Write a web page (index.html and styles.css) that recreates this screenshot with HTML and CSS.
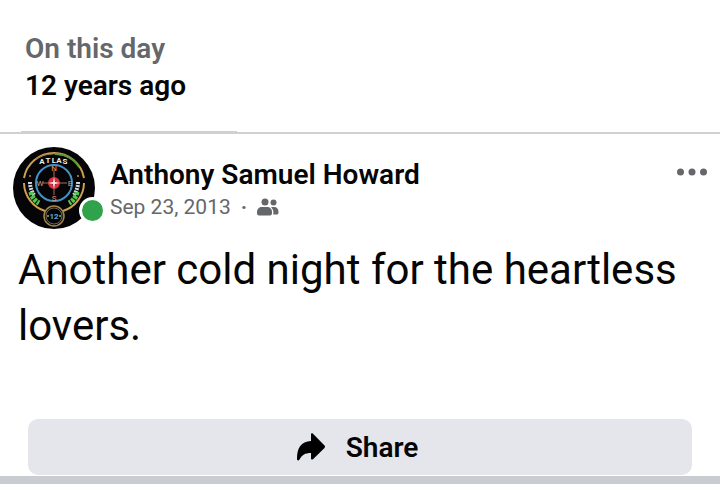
FILE: index.html
```html
<!DOCTYPE html>
<html lang="en">
<head>
    <meta charset="UTF-8">
    <meta name="viewport" content="width=device-width, initial-scale=1.0">
    <title>Memories</title>
    <link rel="stylesheet" href="styles.css">
</head>
<body>
    <header class="memory-header">
        <h2 class="memory-label">On this day</h2>
        <p class="memory-age">12 years ago</p>
    </header>
    <div class="divider"></div>

    <article class="post">
        <div class="post-header">
            <div class="avatar">
                <svg viewBox="0 0 82 82" role="img" aria-label="Profile picture">
                    <circle cx="41" cy="41" r="41" fill="#050507"/>
                    <g fill="none">
                        <path d="M11 31A30.500 30.500 0 0 1 71 31" stroke="#cf9f50" stroke-width="2"/>
                        <path d="M22 12Q40 1 61 13" stroke="#9a7a3c" stroke-width="1"/>
                        <path d="M42 7Q58 7 66 20" stroke="#5d9b3a" stroke-width="2"/>
                        <path d="M11 36A30 30 0 0 0 32 64M71 36A30 30 0 0 1 50 64" stroke="#cf9f50" stroke-width="2"/>
                        <circle cx="41" cy="36" r="18" stroke="#4690c4" stroke-width="2"/>
                        <path d="M41 23V48M30 36H54" stroke="#b06a58" stroke-width="1"/>
                        <circle cx="41" cy="36" r="4" stroke="#d8303e" stroke-width="4"/>
                        <path d="M17 35Q17 42 21 48M65 35Q65 42 61 48" stroke="#d5d9dd" stroke-width="4" stroke-dasharray="2 1"/>
                        <path d="M18 45Q19 52 26 56M64 45Q63 52 56 56" stroke="#52c64c" stroke-width="5" stroke-dasharray="3 1"/>
                        <circle cx="41" cy="69" r="10" stroke="#a5884f" stroke-width="1.5"/>
                        <circle cx="41" cy="69" r="8" stroke="#716b55" stroke-width="1"/>
                    </g>
                    <path d="M41 30L42 35L47 36L42 37L41 42L40 37L35 36L40 35Z" fill="#f8e6e7"/>
                    <g class="emblem-text">
                        <text x="29" y="17">A</text>
                        <text x="35" y="16">T</text>
                        <text x="41" y="16">L</text>
                        <text x="46" y="16">A</text>
                        <text x="52" y="17">S</text>
                    </g>
                    <g class="emblem-points">
                        <text x="41" y="24">N</text>
                        <text x="41" y="54">S</text>
                        <text x="27" y="39">W</text>
                        <text x="57" y="39">E</text>
                    </g>
                    <text class="emblem-number" x="41" y="72">12</text>
                    <circle cx="35" cy="69" r="1" fill="#70c65b"/>
                    <circle cx="47" cy="69" r="1" fill="#70c65b"/>
                    <circle cx="17" cy="29" r="1" fill="#c98545"/>
                    <circle cx="65" cy="29" r="1" fill="#c98545"/>
                </svg>
                <span class="online"></span>
            </div>
            <div class="author">
                <h3 class="author-name">Anthony Samuel Howard</h3>
                <div class="post-meta">
                    <time datetime="2013-09-23">Sep 23, 2013</time>
                    <span class="dot">·</span>
                    <svg class="friends-icon" viewBox="0 0 22 18" role="img" aria-label="Friends">
                        <circle cx="8" cy="4" r="3.500"/>
                        <circle cx="16.500" cy="4.500" r="3"/>
                        <path d="M0 14C0 11 2 9 5 9H10C13 9 15 11 15 14V15C15 17 14 17.500 12 17.500H3C1 17.500 0 17 0 15Z"/>
                        <path d="M14 9H17C20 9 21.500 11 21.500 14C21.500 16 21 16.500 19 16.500H16.200C17 14 16 11 14 9Z"/>
                    </svg>
                </div>
            </div>
            <button class="more" type="button" aria-label="More options">
                <svg viewBox="0 0 30 8">
                    <circle cx="3.500" cy="4" r="3.500"/>
                    <circle cx="15" cy="4" r="3.500"/>
                    <circle cx="26.500" cy="4" r="3.500"/>
                </svg>
            </button>
        </div>
        <p class="post-text">Another cold night for the heartless lovers.</p>
        <button class="share" type="button">
            <svg viewBox="0 0 30 28">
                <path d="M15 1.500C15 .2 16.200 0 17 .8L28.500 12.600C29.200 13.400 29.200 14.200 28.500 15L17 26.200C16 27 15 26.600 15 25.500V20C9 20 6 22 3.500 26.500C2.500 28 1 27.700 1 26C1 15 5 8.500 15 8Z"/>
            </svg>
            Share
        </button>
    </article>
    <div class="feed-gap"></div>
</body>
</html>
```
FILE: styles.css
```css
* {
    box-sizing: border-box;
}
body {
    display: flex;
    flex-direction: column;
    min-height: 100vh;
    margin: 0;
    background: #fff;
    color: #050505;
    font-family: Roboto, sans-serif;
}
h2, h3, p {
    margin: 0;
}
.memory-header {
    padding: 30px 25px 27px;
}
.memory-label, .memory-age {
    font-size: 28px;
    font-weight: 600;
    line-height: 37px;
}
.memory-label {
    color: #65676b;
}
.divider {
    height: 3px;
    border-bottom: 2px solid #ced0d4;
}
.divider::before {
    content: "";
    display: block;
    width: 30%;
    height: 1px;
    margin-left: 21px;
    background: #ced0d4;
}
.post {
    display: flex;
    flex-direction: column;
    padding: 13px 13px 1px;
}
.post-header {
    display: flex;
    align-items: flex-start;
}
.avatar {
    position: relative;
    width: 82px;
    height: 82px;
}
.avatar svg {
    display: block;
}
.online {
    position: absolute;
    right: -11px;
    bottom: 5px;
    width: 27px;
    height: 27px;
    border: 3px solid #fff;
    border-radius: 50%;
    background: #31a24c;
}
.emblem-text {
    fill: #f0ece4;
    font-size: 8px;
    font-weight: 700;
    text-anchor: middle;
}
.emblem-points {
    fill: #e09a78;
    font-size: 8px;
    text-anchor: middle;
}
.emblem-number {
    fill: #62a9da;
    font-size: 8px;
    font-weight: 700;
    text-anchor: middle;
}
.author {
    flex: 1;
    padding: 10px 0 0 15px;
}
.author-name {
    font-size: 28px;
    font-weight: 600;
    line-height: 36px;
}
.post-meta {
    display: flex;
    align-items: center;
    gap: 10px;
    color: #65676b;
    font-size: 21px;
    line-height: 28px;
}
.dot {
    font-weight: 700;
}
.friends-icon {
    width: 22px;
    height: 18px;
    fill: #65676b;
}
.more {
    display: flex;
    padding: 21px 0;
    border: 0;
    background: none;
    cursor: pointer;
}
.more svg {
    width: 30px;
    height: 8px;
    fill: #65676b;
}
.post-text {
    padding: 13px 5px 0;
    font-size: 42px;
    line-height: 56px;
}
.share {
    display: flex;
    justify-content: center;
    align-items: center;
    gap: 20px;
    height: 56px;
    margin: 65px 15px 0;
    padding: 0 6px 0 0;
    border: 0;
    border-radius: 10px;
    background: #e4e6eb;
    color: #050505;
    font-family: inherit;
    font-size: 28px;
    font-weight: 600;
    cursor: pointer;
}
.share svg {
    width: 30px;
    height: 28px;
}
.feed-gap {
    flex: 1;
    min-height: 8px;
    background: #c9ccd1;
}
```
